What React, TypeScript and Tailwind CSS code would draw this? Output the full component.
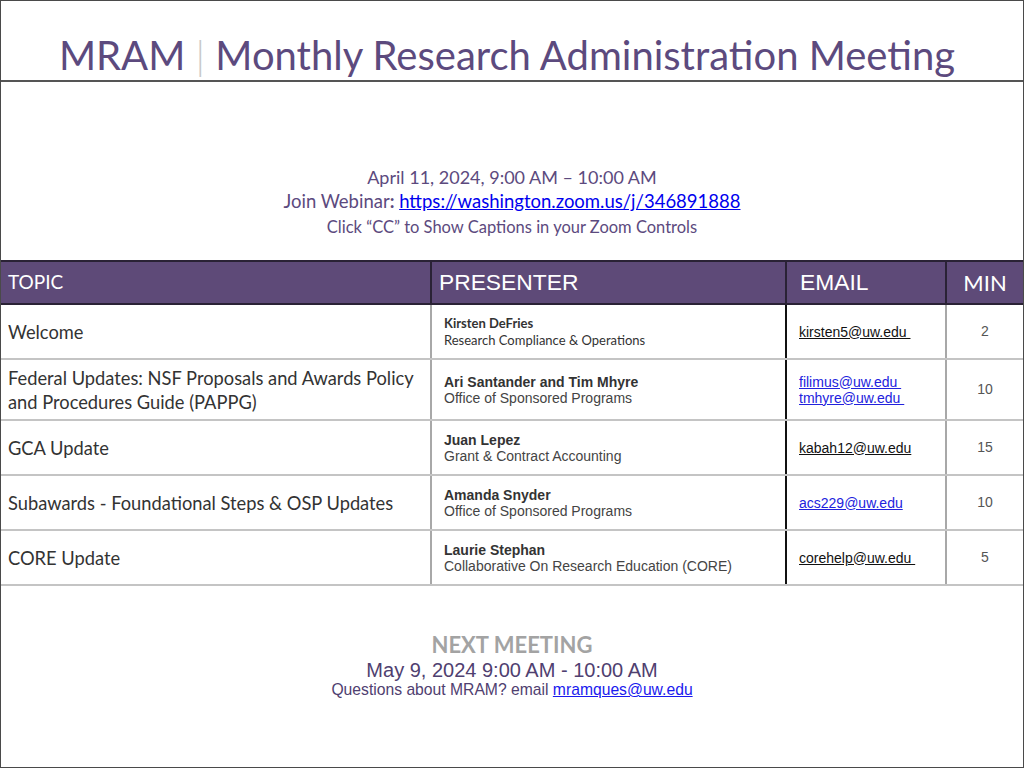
import React from "react";

const lato = { fontFamily: "Lato, 'Noto Sans', sans-serif" };
const arial = { fontFamily: "'Liberation Sans', Arial, sans-serif" };

type Row = {
  topic: string[];
  name: string;
  dept: string;
  latoPresenter?: boolean;
  emails: { t: string; blue: boolean }[];
  min: string;
  h: string;
};

const rows: Row[] = [
  {
    topic: ["Welcome"],
    name: "Kirsten DeFries",
    dept: "Research Compliance & Operations",
    latoPresenter: true,
    emails: [{ t: "kirsten5@uw.edu ", blue: false }],
    min: "2",
    h: "h-[55px]",
  },
  {
    topic: ["Federal Updates: NSF Proposals and Awards Policy", "and Procedures Guide (PAPPG)"],
    name: "Ari Santander and Tim Mhyre",
    dept: "Office of Sponsored Programs",
    emails: [
      { t: "filimus@uw.edu ", blue: true },
      { t: "tmhyre@uw.edu ", blue: true },
    ],
    min: "10",
    h: "h-[61px]",
  },
  {
    topic: ["GCA Update"],
    name: "Juan Lepez",
    dept: "Grant & Contract Accounting",
    emails: [{ t: "kabah12@uw.edu", blue: false }],
    min: "15",
    h: "h-[55px]",
  },
  {
    topic: ["Subawards - Foundational Steps & OSP Updates"],
    name: "Amanda Snyder",
    dept: "Office of Sponsored Programs",
    emails: [{ t: "acs229@uw.edu", blue: true }],
    min: "10",
    h: "h-[55px]",
  },
  {
    topic: ["CORE Update"],
    name: "Laurie Stephan",
    dept: "Collaborative On Research Education (CORE)",
    emails: [{ t: "corehelp@uw.edu ", blue: false }],
    min: "5",
    h: "h-[55px]",
  },
];

export default function App() {
  return (
    <div className="w-[1024px] h-[768px] border border-[#4a4a4a] bg-white flex flex-col overflow-hidden">
      {/* Title */}
      <div className="h-[81px] shrink-0 border-b-2 border-[#555] flex items-end justify-center pb-[1px]">
        <div style={lato} className="text-[40px] leading-[48px] text-[#5c4a7e] whitespace-nowrap -ml-[10px]">
          MRAM <span className="text-[#c8c8c8] font-light">|</span> Monthly Research Administration Meeting
        </div>
      </div>

      {/* Info */}
      <div className="h-[178px] shrink-0 flex flex-col items-center pt-[83px] text-[#5c4a7e]" style={lato}>
        <div className="text-[18px] leading-[24px]">April 11, 2024, 9:00 AM – 10:00 AM</div>
        <div className="text-[18.5px] leading-[24px]">
          Join Webinar<span className="font-bold">:</span>{" "}
          <span className="text-[#0000ee] underline">https://washington.zoom.us/j/346891888</span>
        </div>
        <div className="text-[16.5px] leading-[28px]">Click “CC” to Show Captions in your Zoom Controls</div>
      </div>

      {/* Table */}
      <div className="shrink-0 flex flex-col">
        <div className="h-[45px] flex bg-[#5e4a78] border-t-2 border-b-2 border-[#2a2235] text-white">
          <div className="w-[431px] shrink-0 border-r-2 border-[#2a2235] flex items-center pl-[7px]" style={lato}>
            <span className="text-[19px]">TOPIC</span>
          </div>
          <div className="w-[355px] shrink-0 border-r-2 border-[#2a2235] flex items-center pl-[7px]" style={arial}>
            <span className="text-[22.8px]">PRESENTER</span>
          </div>
          <div className="w-[160px] shrink-0 border-r-2 border-[#2a2235] flex items-center pl-[13px]" style={arial}>
            <span className="text-[22.8px]">EMAIL</span>
          </div>
          <div className="flex-1 flex items-center justify-center" style={lato}>
            <span className="text-[22px]">MIN</span>
          </div>
        </div>
        {rows.map((r, i) => (
          <div key={i} className={`${r.h} flex border-b-2 border-[#c4c4c4]`}>
            <div className="w-[431px] shrink-0 border-r-2 border-[#a8a8a8] flex items-center pl-[7px] text-[#333]" style={lato}>
              <div className="text-[18.3px] leading-[24px]">
                {r.topic.map((t, j) => (
                  <div key={j}>{t}</div>
                ))}
              </div>
            </div>
            <div className="w-[355px] shrink-0 border-r-2 border-[#111] flex items-center pl-[12px] text-[#333]">
              {r.latoPresenter ? (
                <div style={lato} className="leading-[17px]">
                  <div className="text-[13px] font-bold">{r.name}</div>
                  <div className="text-[13px]">{r.dept}</div>
                </div>
              ) : (
                <div style={arial} className="leading-[16px]">
                  <div className="text-[14px] font-bold">{r.name}</div>
                  <div className="text-[14px] text-[#444]">{r.dept}</div>
                </div>
              )}
            </div>
            <div className="w-[160px] shrink-0 border-r-2 border-[#a8a8a8] flex flex-col justify-center pl-[12px]" style={arial}>
              {r.emails.map((e, j) => (
                <div
                  key={j}
                  className={`text-[14px] leading-[16px] underline whitespace-pre ${e.blue ? "text-[#2222dd]" : "text-[#111]"}`}
                >
                  {e.t}
                </div>
              ))}
            </div>
            <div className="flex-1 flex items-center justify-center text-[14px] text-[#555]" style={arial}>
              {r.min}
            </div>
          </div>
        ))}
      </div>

      {/* Next meeting */}
      <div className="flex flex-col items-center pt-[46px]">
        <div style={lato} className="text-[22px] leading-[26px] font-bold text-[#a3a3a3]">NEXT MEETING</div>
        <div style={arial} className="text-[20px] leading-[24px] text-[#4f4070]">May 9, 2024 9:00 AM - 10:00 AM</div>
        <div style={arial} className="text-[15.7px] leading-[16px] text-[#4f4070]">
          Questions about MRAM? email <span className="text-[#1a1aee] underline">mramques@uw.edu</span>
        </div>
      </div>
    </div>
  );
}
